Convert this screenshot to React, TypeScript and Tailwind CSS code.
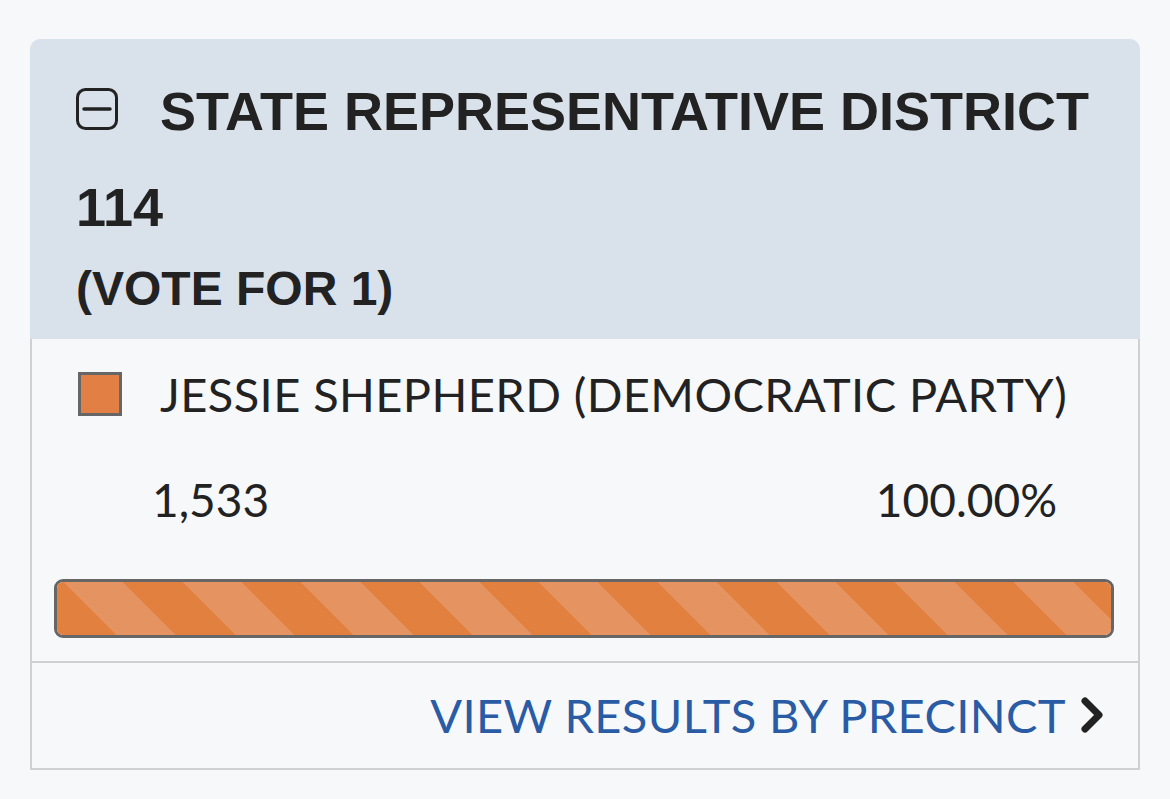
import React from "react";

const candidate = {
  name: "JESSIE SHEPHERD (DEMOCRATIC PARTY)",
  votes: "1,533",
  pct: 100,
};

const CollapseIcon = () => (
  <svg width="42" height="42" viewBox="0 0 42 42" className="inline-block align-baseline mr-[42px]">
    <rect x="1.5" y="1.5" width="39" height="39" rx="8" fill="none" stroke="#222" strokeWidth="3" />
    <line x1="8" y1="21" x2="34" y2="21" stroke="#222" strokeWidth="3.5" strokeLinecap="round" />
  </svg>
);

export default function App() {
  return (
    <div className="min-h-[799px] w-[1170px] bg-[#f7f8fa] pt-[39px] px-[30px] text-[#222]">
      <div className="w-[1110px]">
        <div className="bg-[#d9e1ea] rounded-t-[10px] pl-[46px] pr-[30px] pt-[24px] pb-[16px]" style={{ fontFamily: '"Liberation Sans", Arial, sans-serif' }}>
          <h2 className="font-bold text-[54px] leading-[96px]">
            <CollapseIcon />
            STATE REPRESENTATIVE DISTRICT 114
          </h2>
          <div className="font-bold text-[48px] leading-[68px]">(VOTE FOR 1)</div>
        </div>

        <div className="border-x-2 border-b-2 border-[#cfd0d2]" style={{ fontFamily: 'Lato, "Open Sans", sans-serif' }}>
          <div className="pt-[25px] pb-[23px] pl-[46px] pr-[24px]">
            <div className="flex items-center">
              <span className="w-[44px] h-[44px] bg-[#e27f45] border-[3px] border-[#666] shrink-0" />
              <span className="ml-[38px] text-[47px] leading-[60px] tracking-[0.4px]">{candidate.name}</span>
            </div>
            <div className="flex justify-between mt-[46px] pl-[74px] pr-[57px] text-[46px] leading-[60px]">
              <span>{candidate.votes}</span>
              <span>{candidate.pct.toFixed(2)}%</span>
            </div>
            <div className="mt-[49px] -ml-[24px] h-[59px] rounded-[9px] border-[3px] border-[#666] bg-[#e69161] overflow-hidden">
              <div
                className="h-full"
                style={{
                  width: `${candidate.pct}%`,
                  backgroundImage:
                    "repeating-linear-gradient(45deg, #e2803f 0 42px, #e69362 42px 84px)",
                }}
              />
            </div>
          </div>
          <div className="border-t-2 border-[#cfd0d2] pt-[22px] pb-[23px] pr-[32px] flex justify-end items-center">
            <a className="text-[47px] leading-[60px] tracking-[0.4px] text-[#2a5ba5]">VIEW RESULTS BY PRECINCT</a>
            <svg width="26" height="38" viewBox="0 0 26 38" className="ml-[14px]">
              <path d="M5 5 L19 19 L5 33" fill="none" stroke="#222" strokeWidth="7" strokeLinecap="round" strokeLinejoin="round" />
            </svg>
          </div>
        </div>
      </div>
    </div>
  );
}
